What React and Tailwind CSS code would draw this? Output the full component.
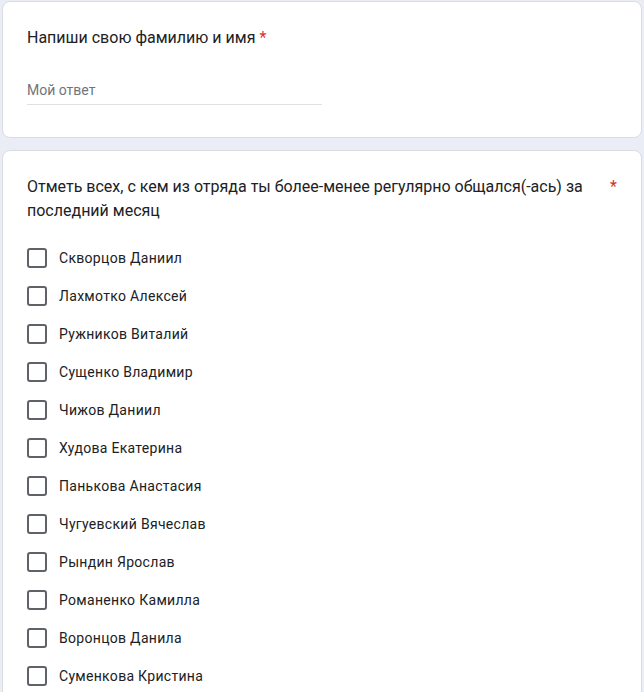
import React, { useState } from 'react';

const names = [
  'Скворцов Даниил',
  'Лахмотко Алексей',
  'Ружников Виталий',
  'Сущенко Владимир',
  'Чижов Даниил',
  'Худова Екатерина',
  'Панькова Анастасия',
  'Чугуевский Вячеслав',
  'Рындин Ярослав',
  'Романенко Камилла',
  'Воронцов Данила',
  'Суменкова Кристина',
];

export default function App() {
  const [checked, setChecked] = useState({});

  const toggle = (name) => setChecked({ ...checked, [name]: !checked[name] });

  return (
    <div
      className="min-h-screen bg-[#ebedf6] px-[2px] pt-px"
      style={{ fontFamily: 'Roboto, "Noto Sans", sans-serif' }}
    >
      <div className="rounded-lg border border-[#dadce0] bg-white px-6 pt-6 pb-8">
        <div className="text-base leading-6 text-[#202124]">
          Напиши свою фамилию и имя <span className="text-[#d93025]">*</span>
        </div>
        <div className="mt-[30px] w-[295px] border-b border-[#e0e0e0] pb-[4px] text-sm leading-5 text-[#70757a]">
          Мой ответ
        </div>
      </div>

      <div className="mt-3 rounded-lg border border-[#dadce0] bg-white px-6 pt-6 pb-6">
        <div className="flex text-base leading-6 text-[#202124]">
          <div className="flex-1 pr-[12px]">
            Отметь всех, с кем из отряда ты более-менее регулярно общался(-ась) за последний месяц
          </div>
          <span className="shrink-0 text-[#d93025]">*</span>
        </div>
        <div className="mt-[16px] flex flex-col">
          {names.map((name) => (
            <label
              key={name}
              className="flex h-[38px] cursor-pointer items-center"
              onClick={() => toggle(name)}
            >
              <span
                className={
                  'flex h-5 w-5 items-center justify-center rounded-[3px] border-2 ' +
                  (checked[name] ? 'border-[#673ab7] bg-[#673ab7]' : 'border-[#5f6368]')
                }
              >
                {checked[name] && (
                  <svg viewBox="0 0 24 24" className="h-4 w-4" fill="none" stroke="white" strokeWidth="3">
                    <path d="M5 12l5 5 9-10" />
                  </svg>
                )}
              </span>
              <span className="ml-3 text-sm tracking-[0.3px] text-[#202124]">{name}</span>
            </label>
          ))}
        </div>
      </div>
    </div>
  );
}
